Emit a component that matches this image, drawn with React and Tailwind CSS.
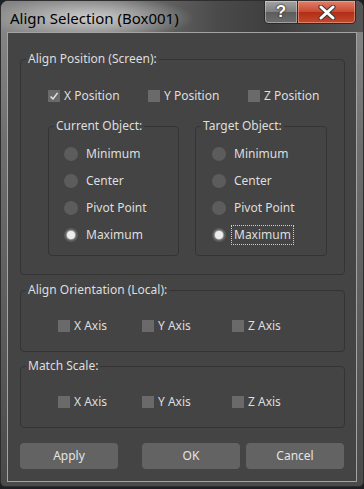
import React from 'react'

// small pieces of the 3ds Max style dialog

const CheckBox = ({ checked, label, className = '' }) => (
  <div className={`flex items-center gap-[4px] ${className}`}>
    <span className="w-[12px] h-[12px] shrink-0 bg-[#6a6a6a] flex items-center justify-center">
      {checked && (
        <svg width="10" height="10" viewBox="0 0 10 10">
          <path d="M1.6 5.4 L4 7.9 L8.6 1.9" stroke="#e6e6e6" strokeWidth="1.5" fill="none" />
        </svg>
      )}
    </span>
    <span className="leading-[16px] whitespace-nowrap">{label}</span>
  </div>
)

const Radio = ({ selected, focused, label }) => (
  <div className="h-[27px] flex items-center">
    <span className="w-[14px] h-[14px] shrink-0 rounded-full bg-[#5c5c5c] flex items-center justify-center">
      {selected && <span className="w-[8px] h-[8px] rounded-full bg-[#ededed] shadow-[0_0_1px_1px_#a9a9a9]" />}
    </span>
    {focused ? (
      <span className="ml-[5px] px-[2px] py-px border border-dotted border-[#cfcfcf] leading-[16px]">{label}</span>
    ) : (
      <span className="ml-[8px] leading-[16px]">{label}</span>
    )}
  </div>
)

const Group = ({ label, className = '', children }) => (
  <div className={`relative border border-[#343434] rounded-[4px] ${className}`}>
    <span className="absolute left-[5px] top-[-9px] px-[2px] bg-[#444444] leading-[16px] whitespace-nowrap">{label}</span>
    {children}
  </div>
)

const Button = ({ children, className = '' }) => (
  <button className={`w-[98px] h-[26px] rounded-[4px] bg-[#636363] text-[#e4e4e4] text-[12px] ${className}`}>
    {children}
  </button>
)

const App = () => {
  const positions = ['Minimum', 'Center', 'Pivot Point', 'Maximum']

  return (
    <div className="w-[364px] h-[489px] bg-[#1e1f24] [font-family:'Noto_Sans','DejaVu_Sans',sans-serif] text-[12px] text-[#dedede]">
      <div className="w-[364px] h-[487px] rounded-t-[8px] rounded-b-[5px] border border-[#2e2e2e] overflow-hidden flex flex-col bg-[linear-gradient(to_bottom,#8a8a8a,#6e6e6e_30%,#5a5a5a_70%,#4a4a4a)]">
        {/* title bar */}
        <div className="h-[31px] shrink-0 flex justify-between items-start bg-[radial-gradient(ellipse_105px_22px_at_88px_17px,rgba(215,215,215,0.9),rgba(215,215,215,0)),linear-gradient(to_right,#858585,#7a7a7a_30%,#4a4a4a_60%,#3e3e3e_75%,#555555)]">
          <div className="pl-[9px] pt-[7px] text-[15px] leading-[20px] text-black whitespace-nowrap">
            Align Selection (Box001)
          </div>
          <div className="flex mr-[7px] h-[24px] -mt-px">
            <div className="w-[34px] h-full rounded-bl-[4px] border border-[#2a2a2a] bg-[linear-gradient(to_bottom,#a3a3a3,#7e7e7e_50%,#5c5c5c_51%,#6e6e6e)] flex items-center justify-center shadow-[inset_0_0_0_1px_rgba(255,255,255,0.35)]">
              <span className="text-[17px] leading-[20px] font-bold text-white [font-family:'Liberation_Sans',sans-serif] [text-shadow:0_0_1px_#222,0_0_1px_#222,0_0_2px_#333]">?</span>
            </div>
            <div className="w-[59px] h-full -ml-px rounded-br-[4px] border border-[#2a2a2a] bg-[linear-gradient(to_bottom,#e0806a,#c9482f_50%,#b02e18_51%,#c44a2c)] flex items-center justify-center shadow-[inset_0_0_0_1px_rgba(255,200,180,0.45)]">
              <svg width="18" height="15" viewBox="0 0 18 15">
                <path d="M3 2 L15 13 M15 2 L3 13" stroke="#3a3a3a" strokeWidth="5" strokeLinecap="round" fill="none" />
                <path d="M3 2 L15 13 M15 2 L3 13" stroke="#ffffff" strokeWidth="3" strokeLinecap="round" fill="none" />
              </svg>
            </div>
          </div>
        </div>

        {/* client area */}
        <div className="ml-[6px] mr-[6px] h-[450px] shrink-0 border border-[#a3a3a3] bg-[#444444] flex flex-col pt-[26px] pl-[12px]">
          <Group label="Align Position (Screen):" className="w-[325px] h-[216px]">
            <div className="flex mt-[30px] pl-[27px] h-[12px] items-center">
              <CheckBox checked label="X Position" className="w-[100px]" />
              <CheckBox label="Y Position" className="w-[100px]" />
              <CheckBox label="Z Position" />
            </div>
            <div className="flex gap-[16px] mt-[24px] pl-[27px]">
              <Group label="Current Object:" className="w-[131px] h-[130px] pt-[13px] pl-[15px]">
                {positions.map((p) => (
                  <Radio key={p} label={p} selected={p === 'Maximum'} />
                ))}
              </Group>
              <Group label="Target Object:" className="w-[132px] h-[130px] pt-[13px] pl-[16px]">
                {positions.map((p) => (
                  <Radio key={p} label={p} selected={p === 'Maximum'} focused={p === 'Maximum'} />
                ))}
              </Group>
            </div>
          </Group>

          <Group label="Align Orientation (Local):" className="w-[325px] h-[62px] mt-[15px]">
            <div className="flex mt-[29px] pl-[37px] h-[12px] items-center">
              <CheckBox label="X Axis" className="w-[84px]" />
              <CheckBox label="Y Axis" className="w-[90px]" />
              <CheckBox label="Z Axis" />
            </div>
          </Group>

          <Group label="Match Scale:" className="w-[325px] h-[62px] mt-[14px]">
            <div className="flex mt-[29px] pl-[37px] h-[12px] items-center">
              <CheckBox label="X Axis" className="w-[84px]" />
              <CheckBox label="Y Axis" className="w-[90px]" />
              <CheckBox label="Z Axis" />
            </div>
          </Group>

          <div className="flex mt-[15px]">
            <Button>Apply</Button>
            <Button className="ml-[24px]">OK</Button>
            <Button className="ml-[6px]">Cancel</Button>
          </div>
        </div>
      </div>
    </div>
  )
}

export default App
